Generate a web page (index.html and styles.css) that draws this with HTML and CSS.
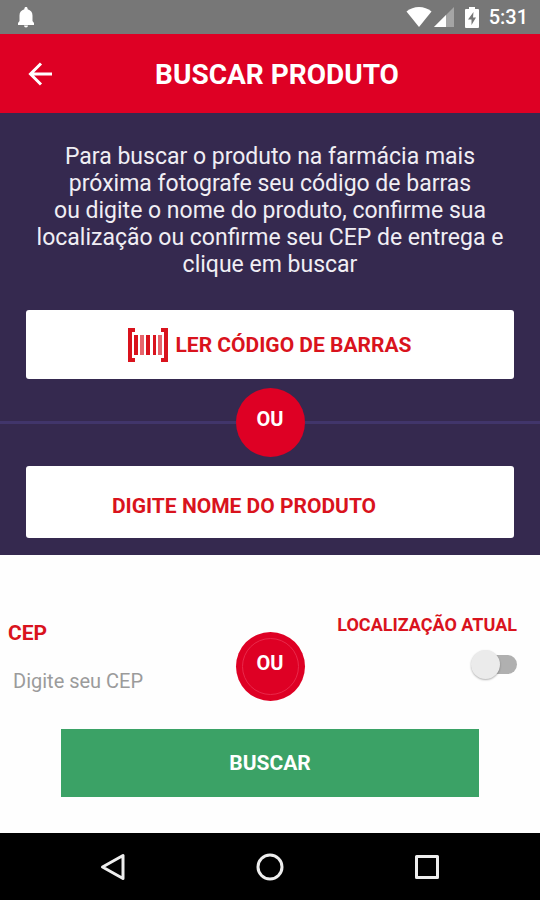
FILE: index.html
```
<!DOCTYPE html>
<html lang="pt-BR">
<head>
  <meta charset="UTF-8" />
  <meta name="viewport" content="width=device-width, initial-scale=1.0">
  <title>Buscar Produto</title>
  <link rel="stylesheet" href="styles.css">
</head>
<body>
  <!-- STATUS -->
  <div class="status-bar">
    <svg class="bell" width="18" height="21" viewBox="0 0 18 21" fill="#fff">
      <path d="M9 0c1 0 1.600.7 1.600 1.700v.6C13.800 3.100 15.500 5.500 15.500 8.500v5.500l1.500 2v2H1v-2l1.500-2V8.500c0-3 1.700-5.400 4.900-6.200v-.6C7.400.7 8 0 9 0zM7 18.500h4a2 2 0 0 1-4 0z"/>
    </svg>
    <svg width="26" height="20" viewBox="0 0 26 20" fill="#fff">
      <path d="M13 20L.5 4.500C4 1.700 8.300 0 13 0s9 1.700 12.500 4.500z"/>
    </svg>
    <svg class="signal" width="20" height="20" viewBox="0 0 20 20">
      <path d="M0 20L20 0v20z" fill="#a5a5a5"/>
      <path d="M0 20L12 8v12z" fill="#fff"/>
    </svg>
    <svg class="battery" width="14" height="21" viewBox="0 0 14 21">
      <path d="M4 0h6v2h3q1 0 1 1v17q0 1-1 1H1q-1 0-1-1V3q0-1 1-1h3z" fill="#fff"/>
      <path d="M8.500 5L3 12.500h3.500V18L11 10.500H8z" fill="#777"/>
    </svg>
    <span class="clock">5:31</span>
  </div>

  <header class="header">
    <button class="back" aria-label="Voltar">
      <svg width="24" height="24" viewBox="0 0 24 24" fill="none" stroke="#fff" stroke-width="3">
        <path d="M24 12H3M13 1.500L2.500 12 13 22.500"/>
      </svg>
    </button>
    <h1>BUSCAR PRODUTO</h1>
  </header>

  <!-- PRODUTO -->
  <section class="product">
    <p class="intro">Para buscar o produto na farmácia mais<br>próxima fotografe seu código de barras<br>ou digite o nome do produto, confirme sua localização ou confirme seu CEP de entrega e clique em buscar</p>
    <button class="scan">
      <svg width="40" height="34" viewBox="0 0 40 34" fill="#d9131d">
        <path d="M0 0h7v4H4v26h3v4H0zM33 0h7v34h-7v-4h3V4h-3z"/>
        <path d="M6 7h4v20H6zM18 7h4v20h-4zM25 7h3v20h-3z"/>
        <path d="M12 7h4v20h-4zM30 7h4v20h-4z" opacity=".65"/>
      </svg>
      LER CÓDIGO DE BARRAS
    </button>
    <div class="divider"><span class="or">OU</span></div>
    <input class="product-name" type="text" placeholder="DIGITE NOME DO PRODUTO" aria-label="Nome do produto">
  </section>

  <!-- ENTREGA -->
  <section class="delivery">
    <div class="options">
      <div class="cep">
        <label for="cep">CEP</label>
        <input type="text" id="cep" placeholder="Digite seu CEP">
      </div>
      <span class="or or-ring">OU</span>
      <div class="location">
        <label for="location">LOCALIZAÇÃO ATUAL</label>
        <input class="switch" type="checkbox" role="switch" id="location">
      </div>
    </div>
    <button class="search">BUSCAR</button>
  </section>

  <nav class="nav-bar">
    <button aria-label="Voltar">
      <svg width="28" height="28" viewBox="0 0 28 28" fill="none" stroke="#eee" stroke-width="3" stroke-linejoin="round">
        <path d="M24 2.500v23L3.500 14z"/>
      </svg>
    </button>
    <button aria-label="Início">
      <svg width="28" height="28" viewBox="0 0 28 28" fill="none" stroke="#eee" stroke-width="3">
        <circle cx="14" cy="14" r="12"/>
      </svg>
    </button>
    <button aria-label="Recentes">
      <svg width="28" height="28" viewBox="0 0 28 28" fill="none" stroke="#eee" stroke-width="3" stroke-linejoin="round">
        <path d="M3.500 3.500h21v21h-21z"/>
      </svg>
    </button>
  </nav>
</body>
</html>
```
FILE: styles.css
```
* {
  box-sizing: border-box;
  font-family: Roboto, sans-serif;
}

body {
  margin: 0;
  min-height: 100vh;
  display: flex;
  flex-direction: column;
  background: #fefefe;
}

button {
  padding: 0;
  border: none;
  background: none;
  cursor: pointer;
}

svg {
  display: block;
}

.status-bar {
  display: flex;
  align-items: center;
  height: 34px;
  padding: 0 12px 0 17px;
  background: #777;
}

.bell {
  margin-right: auto;
}

.signal {
  margin-left: 2px;
}

.battery {
  margin: 0 10px 0 11px;
}

.clock {
  color: #fff;
  font-size: 20px;
  font-weight: 500;
}

.header {
  display: grid;
  grid-template-columns: 56px 1fr 56px;
  align-items: center;
  height: 79px;
  background: #de0024;
}

.back {
  display: flex;
  justify-content: flex-end;
  padding-right: 4px;
}

.header h1 {
  margin: 0;
  padding: 2px 0 0 14px;
  color: #fff;
  font-size: 28px;
  font-weight: 700;
  text-align: center;
}

.product {
  padding: 30px 26px 17px;
  background: #35294f;
}

.intro {
  margin: 0 0 32px;
  color: #f0eef4;
  font-size: 23px;
  line-height: 27px;
  text-align: center;
}

.scan {
  display: flex;
  justify-content: center;
  align-items: center;
  gap: 7px;
  width: 100%;
  height: 69px;
  background: #fff;
  border-radius: 3px;
  color: #d9131d;
  font-size: 21px;
  font-weight: 700;
}

.divider {
  display: flex;
  align-items: center;
  margin: 9px -26px;
}

.divider::before,
.divider::after {
  content: "";
  flex: 1;
  height: 3px;
  background: #41356b;
}

.or {
  display: flex;
  justify-content: center;
  align-items: center;
  width: 69px;
  height: 69px;
  padding-bottom: 8px;
  background: #de0024;
  border-radius: 50%;
  color: #fff;
  font-size: 20px;
  font-weight: 700;
}

.or-ring {
  outline: 1px solid #e9284a;
  outline-offset: -7px;
}

.product-name {
  display: block;
  width: 100%;
  height: 72px;
  padding: 8px 52px 0 0;
  border: none;
  border-radius: 3px;
  background: #fff;
  color: #d9131d;
  font-size: 21px;
  font-weight: 700;
  text-align: center;
}

.product-name::placeholder {
  color: #d9131d;
}

.delivery {
  flex: 1;
  padding: 58px 0 36px;
}

.options {
  display: grid;
  grid-template-columns: 1fr auto 1fr;
  align-items: start;
}

.options label {
  color: #d9131d;
  font-size: 21px;
  font-weight: 700;
}

.options .or {
  margin-top: 19px;
}

.cep {
  display: flex;
  flex-direction: column;
  gap: 20px;
  padding: 8px 8px 0;
}

.cep input {
  width: 100%;
  height: 32px;
  padding: 0 5px;
  border: none;
  background: none;
  font-size: 20px;
}

.cep input::placeholder {
  color: #9b9b9b;
}

.location {
  display: flex;
  flex-direction: column;
  align-items: flex-end;
  gap: 16px;
  padding: 1px 23px 0 0;
}

.location label {
  font-size: 18px;
  white-space: nowrap;
}

/* interruptor */
.switch {
  appearance: none;
  position: relative;
  width: 44px;
  height: 19px;
  margin: 4px 0 0;
  border-radius: 10px;
  background: #b0b0b0;
}

.switch::before {
  content: "";
  position: absolute;
  top: -5px;
  left: -2px;
  width: 29px;
  height: 29px;
  border-radius: 50%;
  background: #ebebeb;
  box-shadow: 0 1px 2px rgba(0,0,0,0.3);
}

.switch:checked::before {
  left: 18px;
  background: #de0024;
}

.search {
  display: block;
  width: calc(100% - 122px);
  height: 68px;
  margin: 28px auto 0;
  background: #3ba266;
  color: #fff;
  font-size: 21px;
  font-weight: 700;
}

.nav-bar {
  display: flex;
  justify-content: center;
  align-items: center;
  gap: 129px;
  height: 67px;
  background: #000;
}
```
